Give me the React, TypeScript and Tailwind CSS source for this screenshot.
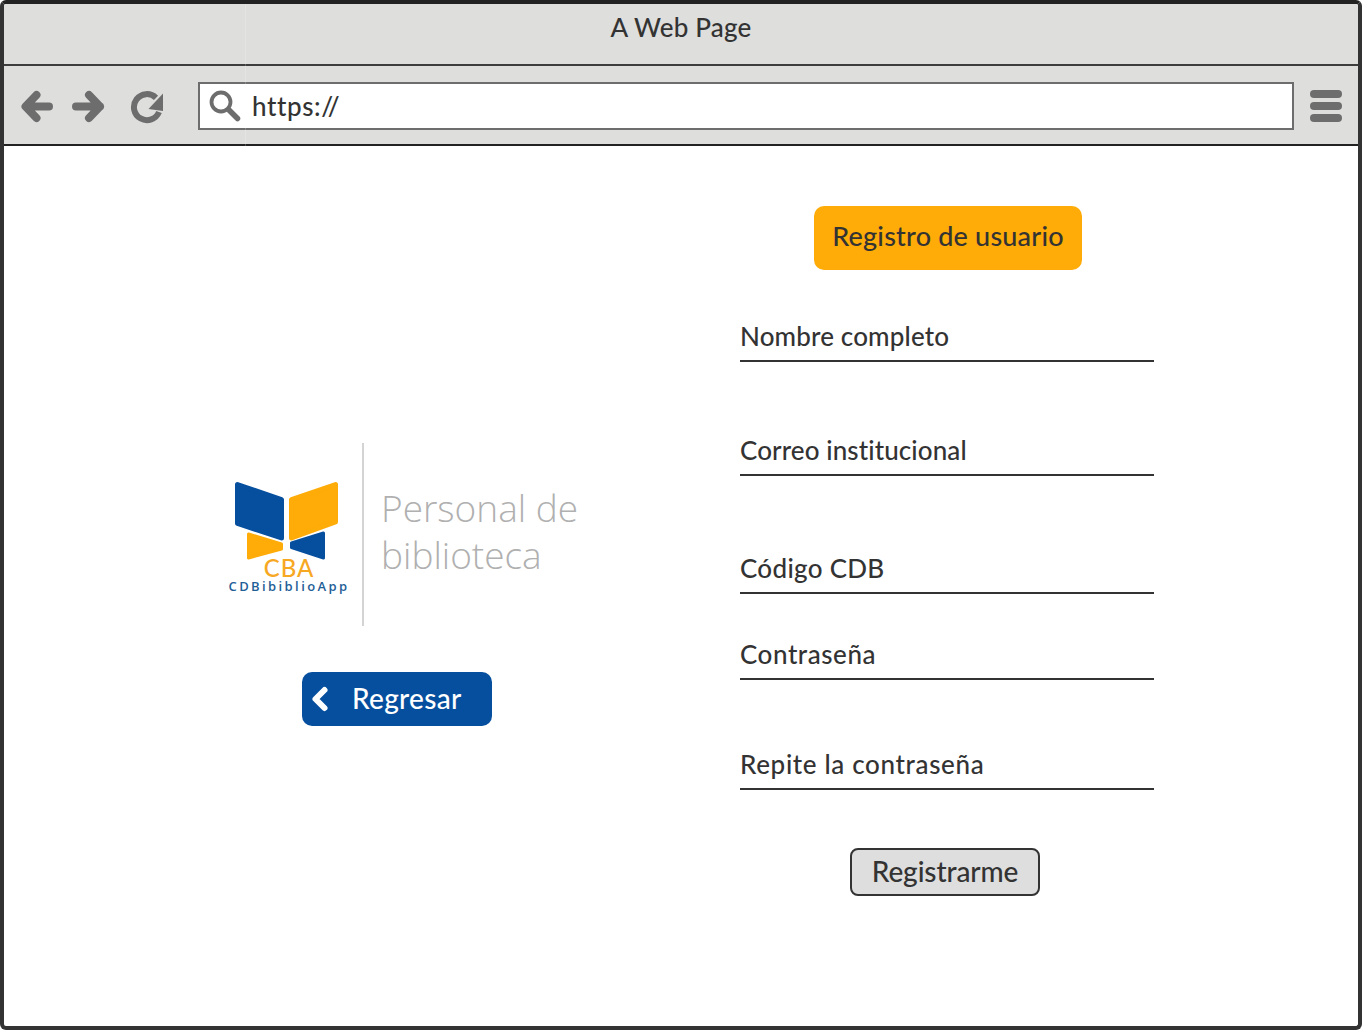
import { ChevronLeft } from "lucide-react";

const fields = [
  { label: "Nombre completo", gap: "mt-[56px]", tracking: "tracking-[0.15px]" },
  { label: "Correo institucional", gap: "mt-[78px]", tracking: "tracking-[0.1px]" },
  { label: "Código CDB", gap: "mt-[82px]", tracking: "tracking-[0.3px]" },
  { label: "Contraseña", gap: "mt-[50px]", tracking: "tracking-[0.55px]" },
  { label: "Repite la contraseña", gap: "mt-[74px]", tracking: "tracking-[0.65px]" },
];

function NavIcons() {
  return (
    <svg width="150" height="36" viewBox="0 0 150 36" fill="none" stroke="#6d6d6d" strokeLinecap="round" strokeLinejoin="round">
      <path d="M31 18.500H8M18.500 7 7.500 18.500 18.500 30" strokeWidth="8" />
      <path d="M58 18.500h24M71 7l11 11.500L71 30" strokeWidth="8" />
      <path d="M138 9.800A13 13 0 1 0 141 24" strokeWidth="6" strokeLinecap="butt" strokeLinejoin="miter" />
      <path d="M145 5.500V23l-14.500-2z" fill="#6d6d6d" stroke="none" />
    </svg>
  );
}

function LogoMark() {
  return (
    <svg width="126" height="84" viewBox="0 0 126 84" className="block">
      <g strokeLinejoin="round">
        <path d="M22.500 56 55.500 66v5L22.500 80z" fill="#ffab08" stroke="#ffab08" strokeWidth="3" />
        <path d="M97.500 55 65.500 65v4.500L97.500 80z" fill="#064f9e" stroke="#064f9e" strokeWidth="3" />
        <path d="M11.500 6.500 55.500 21.500V60L11.500 45.500z" fill="#064f9e" stroke="#064f9e" strokeWidth="5" />
        <path d="M109.500 6.500 65.500 21.500V60L109.500 44z" fill="#ffab08" stroke="#ffab08" strokeWidth="5" />
      </g>
    </svg>
  );
}

export default function App() {
  return (
    <div className="relative flex h-[1030px] w-[1362px] flex-col overflow-hidden rounded-[6px] border-4 border-[#333333] border-t-[#222222] bg-white font-['Lato',sans-serif] font-medium text-[#333333]">
      <div className="flex h-[60px] items-center justify-center bg-[#dededd] pb-[14px] text-[26px] tracking-[0.2px]">A Web Page</div>
      <div className="flex h-[82px] items-center border-y-2 border-t-[#3d3d3d] border-b-[#222222] bg-[#dededd] pt-[2px]">
        <div className="ml-[14px] flex w-[180px]">
          <NavIcons />
        </div>
        <div className="flex h-[48px] w-[1096px] items-center border-2 border-[#6d6d6d] bg-white">
          <svg width="36" height="36" viewBox="0 0 36 36" fill="none" stroke="#6d6d6d" className="ml-[6px]">
            <circle cx="15" cy="14" r="9.500" strokeWidth="3.800" />
            <path d="m23.500 22.500 8 8" strokeWidth="5.500" strokeLinecap="round" />
          </svg>
          <span className="ml-[10px] text-[26px] tracking-[0.6px]">https://</span>
        </div>
        <div className="ml-[16px] flex w-[32px] flex-col gap-[4px]">
          <div className="h-[8px] rounded-full bg-[#6d6d6d]" />
          <div className="h-[8px] rounded-full bg-[#6d6d6d]" />
          <div className="h-[8px] rounded-full bg-[#6d6d6d]" />
        </div>
      </div>

      <main className="flex flex-1">
        <section className="w-[736px] pt-[297px]">
          <div className="ml-[222px] flex">
            <div className="w-[126px] pt-[35px]">
              <LogoMark />
              <div className="-mt-[6px] text-center text-[24px] leading-[24px] tracking-[1px] text-[#f7a823]">CBA</div>
              <div className="text-center font-['Open_Sans',sans-serif] text-[13px] leading-[13px] font-semibold tracking-[2.400px] whitespace-nowrap text-[#1f6097]">CDBibiblioApp</div>
            </div>
            <div className="ml-[10px] h-[183px] w-[2px] bg-[#d4d4d4]" />
            <div className="ml-[17px] pt-[41px] font-['Open_Sans',sans-serif] text-[37px] leading-[47px] font-light text-[#b0b0b0]">
              Personal de
              <br />
              biblioteca
            </div>
          </div>
          <div className="mt-[46px] ml-[298px] flex h-[54px] w-[190px] items-center rounded-[10px] bg-[#064f9e] text-[28px] tracking-[0.3px] text-white">
            <ChevronLeft size={36} strokeWidth={4} />
            <span className="ml-[14px] pb-[2px]">Regresar</span>
          </div>
        </section>

        <section className="w-[414px]">
          <div className="mt-[60px] ml-[74px] flex h-[64px] w-[268px] items-center justify-center rounded-[10px] bg-[#ffab08] pb-[3px] text-[27px] tracking-[0.2px]">
            Registro de usuario
          </div>
          {fields.map((field) => (
            <div key={field.label} className={`${field.gap} ${field.tracking} flex h-[36px] items-end border-b-2 border-[#333333] pb-[7px] text-[26px] leading-[34px]`}>
              {field.label}
            </div>
          ))}
          <div className="mt-[58px] ml-[110px] flex h-[48px] w-[190px] items-center justify-center rounded-[8px] border-2 border-[#333333] bg-[#dedede] pb-[3px] text-[28px] tracking-[-0.1px]">
            Registrarme
          </div>
        </section>
      </main>

      <div className="absolute -top-[4px] left-[241px] h-[146px] w-px bg-white/20" />
    </div>
  );
}
